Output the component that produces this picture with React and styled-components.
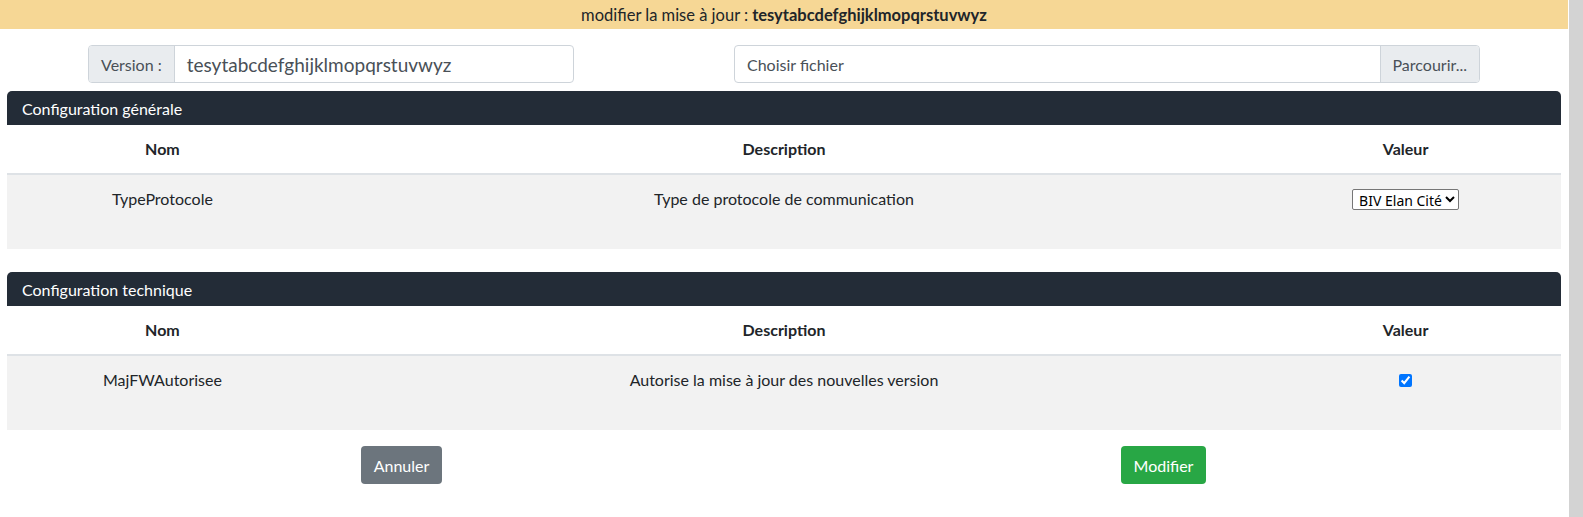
import React from 'react';
import styled, { createGlobalStyle } from 'styled-components';

const GlobalStyle = createGlobalStyle`
  html, body {
    margin: 0;
    padding: 0;
    height: 517px;
    overflow: hidden;
    background: #fff;
  }

  body {
    font-family: Lato, "Noto Sans", "Liberation Sans", sans-serif;
    color: #212529;
    font-size: 16px;
  }

  * {
    box-sizing: border-box;
  }
`;

const Page = styled.div`
  display: flex;
  height: 517px;
`;

const Main = styled.div`
  flex: 1;
  min-width: 0;
`;

const ScrollTrack = styled.div`
  width: 14px;
  background: #d3d3d3;
  margin-left: 1px;
`;

const Banner = styled.div`
  height: 29px;
  background: #f6d795;
  display: flex;
  align-items: center;
  justify-content: center;
  font-size: 16.5px;

  b {
    margin-left: 4px;
    font-weight: 700;
  }
`;

const Toolbar = styled.div`
  display: flex;
  gap: 160px;
  padding: 16px 88px 0;
  height: 62px;
`;

const InputGroup = styled.div`
  display: flex;
  width: ${(p) => p.width}px;
  height: 38px;
  border: 1px solid #ced4da;
  border-radius: 4px;
  overflow: hidden;
`;

const Addon = styled.span`
  display: flex;
  align-items: center;
  padding: 0 12px;
  background: #e9ecef;
  color: #495057;
  font-size: 16px;
  ${(p) => (p.right ? 'border-left: 1px solid #ced4da;' : 'border-right: 1px solid #ced4da;')}
`;

const Field = styled.span`
  flex: 1;
  display: flex;
  align-items: center;
  padding: 0 12px;
  color: #495057;
  font-size: ${(p) => (p.large ? '19px' : '16px')};
`;

const Section = styled.section`
  padding: 0 7px;
  margin-top: ${(p) => p.gap}px;
`;

const SectionTitle = styled.div`
  height: 34px;
  background: #232c37;
  color: #fff;
  border-radius: 5px 5px 0 0;
  display: flex;
  align-items: center;
  padding: 0 15px;
  font-size: 16px;
`;

const Table = styled.table`
  width: 100%;
  border-collapse: collapse;
  table-layout: fixed;

  th {
    font-weight: 700;
    padding: 12px;
    line-height: 24px;
    text-align: center;
    border-bottom: 2px solid #dee2e6;
  }

  td {
    padding: 12px;
    height: 75px;
    line-height: 24px;
    vertical-align: top;
    text-align: center;
    background: #f2f2f2;
  }
`;

const Select = styled.select`
  font-family: "Noto Sans", "Liberation Sans", sans-serif;
  font-size: 14px;
  height: 21px;
  margin-top: 2px;
  border: 1px solid #767676;
  border-radius: 2px;
  background: #fff;
  color: #000;
  padding: 0 0 0 2px;
`;

const Check = styled.input`
  width: 13px;
  height: 13px;
  margin: 6px 0 0;
  accent-color: #0075ff;
`;

const Actions = styled.div`
  display: flex;
  gap: 679px;
  padding: 16px 0 0 361px;
`;

const Button = styled.button`
  height: 38px;
  padding: 0 12px;
  border: none;
  border-radius: 4px;
  font-family: inherit;
  font-size: 16px;
  color: #fff;
  background: ${(p) => (p.variant === 'success' ? '#28a745' : '#6c757d')};
  width: ${(p) => p.width}px;
`;

function ConfigTable({ title, gap, name, description, children }) {
  return (
    <Section gap={gap}>
      <SectionTitle>{title}</SectionTitle>
      <Table>
        <colgroup>
          <col style={{ width: '20%' }} />
          <col style={{ width: '60%' }} />
          <col style={{ width: '20%' }} />
        </colgroup>
        <thead>
          <tr>
            <th>Nom</th>
            <th>Description</th>
            <th>Valeur</th>
          </tr>
        </thead>
        <tbody>
          <tr>
            <td>{name}</td>
            <td>{description}</td>
            <td>{children}</td>
          </tr>
        </tbody>
      </Table>
    </Section>
  );
}

export default function App() {
  return (
    <Page>
      <GlobalStyle />
      <Main>
        <Banner>
          modifier la mise à jour : <b>tesytabcdefghijklmopqrstuvwyz</b>
        </Banner>
        <Toolbar>
          <InputGroup width={486}>
            <Addon>Version :</Addon>
            <Field large>tesytabcdefghijklmopqrstuvwyz</Field>
          </InputGroup>
          <InputGroup width={746}>
            <Field>Choisir fichier</Field>
            <Addon right>Parcourir...</Addon>
          </InputGroup>
        </Toolbar>
        <ConfigTable
          title="Configuration générale"
          gap={0}
          name="TypeProtocole"
          description="Type de protocole de communication"
        >
          <Select defaultValue="biv">
            <option value="biv">BIV Elan Cité</option>
          </Select>
        </ConfigTable>
        <ConfigTable
          title="Configuration technique"
          gap={23}
          name="MajFWAutorisee"
          description="Autorise la mise à jour des nouvelles version"
        >
          <Check type="checkbox" defaultChecked />
        </ConfigTable>
        <Actions>
          <Button width={81}>Annuler</Button>
          <Button variant="success" width={85}>Modifier</Button>
        </Actions>
      </Main>
      <ScrollTrack />
    </Page>
  );
}
